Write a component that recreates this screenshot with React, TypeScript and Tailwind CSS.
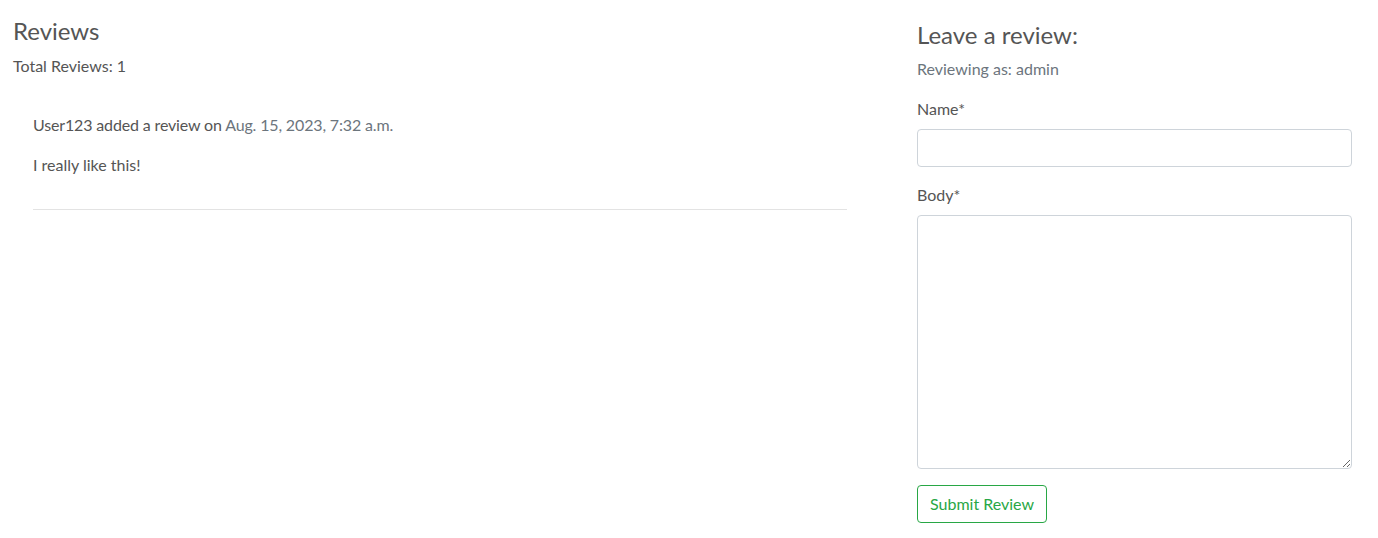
import type { ReactNode } from 'react'

function Field({ label, children }: { label: string; children: ReactNode }) {
  return (
    <div className="flex flex-col">
      <label className="mb-[9px] leading-[22px]">{label}</label>
      {children}
    </div>
  )
}

export default function App() {
  return (
    <div
      className="flex w-[1378px] bg-white text-[16px] text-[#555555]"
      style={{ fontFamily: 'Lato, "Open Sans", sans-serif' }}
    >
      <section className="w-[904px] shrink-0 pl-[13px] pt-[16px]">
        <h2 className="text-[24px] leading-[30px] text-[#555555]">Reviews</h2>
        <p className="mt-[10px] leading-[20px]">Total Reviews: 1</p>

        <div className="mt-[39px] w-[834px] pl-[20px]">
          <p className="leading-[20px] tracking-[-0.15px]">
            User123 added a review on{' '}
            <span className="text-[#6c757d]">Aug. 15, 2023, 7:32 a.m.</span>
          </p>
          <p className="mt-[20px] leading-[20px]">I really like this!</p>
          <hr className="mt-[34px] border-t border-[#e3e3e3]" />
        </div>
      </section>

      <section className="w-[448px] shrink-0 pl-[13px] pt-[20px]">
        <h2 className="text-[24px] leading-[30px] text-[#555555]">Leave a review:</h2>
        <p className="mt-[7px] leading-[24px] text-[#6c757d]">Reviewing as: admin</p>

        <form className="mt-[17px] flex flex-col gap-[17px]">
          <Field label="Name*">
            <input
              type="text"
              className="h-[38px] w-full rounded-[4px] border border-[#ced4da] px-3 outline-none"
            />
          </Field>
          <Field label="Body*">
            <textarea className="h-[254px] w-full resize-y rounded-[4px] border border-[#ced4da] px-3 py-2 outline-none" />
          </Field>
          <div className="-mt-[1px]">
            <button
              type="button"
              className="h-[38px] rounded-[4px] border border-[#28a745] px-[12px] text-[16px] text-[#28a745]"
            >
              Submit Review
            </button>
          </div>
        </form>
      </section>
    </div>
  )
}
